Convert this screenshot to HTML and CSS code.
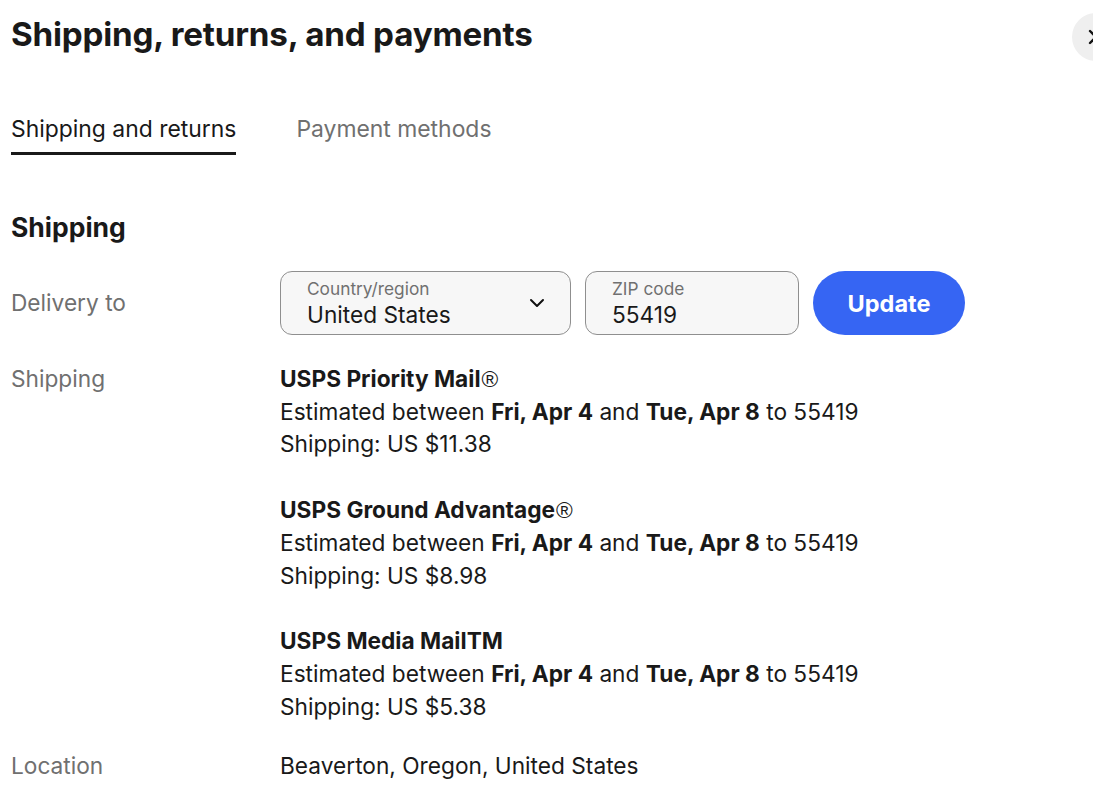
FILE: index.html
```html
<!DOCTYPE html>
<html lang="en">
<head>
<meta charset="utf-8">
<link rel="stylesheet" href="styles.css">
</head>
<body>
<div class="page">
  <header class="header">
    <h1 class="title">Shipping, returns, and payments</h1>
    <button class="close" aria-label="Close">
      <svg width="20" height="20" viewBox="0 0 20 20"><path d="M4 4 L16 16 M16 4 L4 16" stroke="#111" stroke-width="2.4" stroke-linecap="round" fill="none"/></svg>
    </button>
  </header>

  <nav class="tabs">
    <div class="tab active">Shipping and returns</div>
    <div class="tab">Payment methods</div>
  </nav>

  <h2 class="section">Shipping</h2>

  <div class="row delivery">
    <div class="label">Delivery to</div>
    <div class="controls">
      <div class="field country">
        <div class="field-text">
          <span class="field-label">Country/region</span>
          <span class="field-value">United States</span>
        </div>
        <svg class="chev" width="16" height="10" viewBox="0 0 16 10"><path d="M2 2 L8 8 L14 2" stroke="#111" stroke-width="2" fill="none" stroke-linecap="round" stroke-linejoin="round"/></svg>
      </div>
      <div class="field zip">
        <div class="field-text">
          <span class="field-label">ZIP code</span>
          <span class="field-value">55419</span>
        </div>
      </div>
      <button class="update">Update</button>
    </div>
  </div>

  <div class="row shipping">
    <div class="label">Shipping</div>
    <div class="options">
      <div class="option">
        <div class="opt-name">USPS Priority Mail<span class="reg">®</span></div>
        <div>Estimated between <b>Fri, Apr 4</b> and <b>Tue, Apr 8</b> to 55419</div>
        <div>Shipping: US $11.38</div>
      </div>
      <div class="option">
        <div class="opt-name">USPS Ground Advantage<span class="reg">®</span></div>
        <div>Estimated between <b>Fri, Apr 4</b> and <b>Tue, Apr 8</b> to 55419</div>
        <div>Shipping: US $8.98</div>
      </div>
      <div class="option">
        <div class="opt-name">USPS Media MailTM</div>
        <div>Estimated between <b>Fri, Apr 4</b> and <b>Tue, Apr 8</b> to 55419</div>
        <div>Shipping: US $5.38</div>
      </div>
    </div>
  </div>

  <div class="row location">
    <div class="label">Location</div>
    <div class="value">Beaverton, Oregon, United States</div>
  </div>
</div>
</body>
</html>
```

FILE: styles.css
```css
html, body {
  margin: 0;
  padding: 0;
  background: #fff;
  overflow: hidden;
}
body {
  font-family: Inter, "Noto Sans", "Liberation Sans", sans-serif;
  color: #191919;
  width: 1093px;
  height: 800px;
}
.page {
  padding: 0 0 0 11px;
}
.header {
  display: flex;
  justify-content: space-between;
  align-items: center;
  height: 68px;
}
.title {
  margin: 0;
  font-size: 33.2px;
  font-weight: 700;
  letter-spacing: -0.2px;
  line-height: 40px;
}
.close {
  width: 48px;
  height: 48px;
  border-radius: 50%;
  border: none;
  background: #efefef;
  margin-right: -27px;
  margin-top: 5px;
  display: flex;
  align-items: center;
  justify-content: center;
  padding: 0;
}
.tabs {
  display: flex;
  gap: 60px;
  margin-top: 46px;
}
.tab {
  font-size: 22.9px;
  line-height: 30px;
  color: #707070;
  padding-bottom: 8px;
  border-bottom: 3px solid transparent;
}
.tab.active {
  color: #191919;
  border-bottom-color: #191919;
}
.section {
  margin: 56px 0 0;
  font-size: 26.5px;
  font-weight: 700;
  line-height: 32px;
}
.row {
  display: grid;
  grid-template-columns: 269px 1fr;
  font-size: 22.7px;
  line-height: 32.7px;
}
.label {
  color: #707070;
}
.delivery {
  margin-top: 28px;
  align-items: center;
}
.controls {
  display: flex;
  gap: 14px;
}
.field {
  box-sizing: border-box;
  height: 64px;
  border: 1.5px solid #8f8f8f;
  border-radius: 12px;
  background: #f7f7f7;
  display: flex;
  align-items: center;
  padding: 0 26px 0 26px;
}
.country { width: 291px; justify-content: space-between; }
.zip { width: 214px; }
.field-text {
  display: flex;
  flex-direction: column;
}
.field-label {
  font-size: 17.3px;
  line-height: 22px;
  color: #707070;
}
.field-value {
  font-size: 22.7px;
  line-height: 28px;
  color: #191919;
  margin-top: 1px;
}
.chev { margin-right: -1px; }
.update {
  height: 64px;
  width: 152px;
  border: none;
  border-radius: 32px;
  background: #3665f3;
  color: #fff;
  font-family: inherit;
  font-size: 23.5px;
  font-weight: 700;
}
.options {
  display: flex;
  flex-direction: column;
  gap: 33px;
}
.opt-name { font-weight: 700; }
.reg {
  font-family: "Liberation Sans", sans-serif;
  font-size: 1em;
  line-height: 0;
  font-weight: 400;
  margin-left: 1px;
}
b { font-weight: 700; }
.shipping { margin-top: 28px; }
.location { margin-top: 27px; }
```
